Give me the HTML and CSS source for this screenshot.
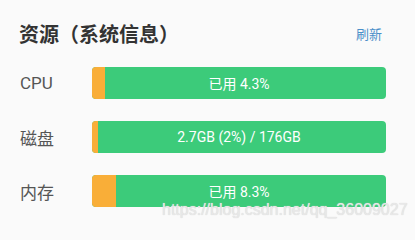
FILE: index.html
```html
<!DOCTYPE html>
<html lang="zh">
<head>
<meta charset="utf-8">
<link rel="stylesheet" href="styles.css">
</head>
<body>
<div class="panel">
  <div class="header">
    <div class="title">资源（系统信息）</div>
    <div class="refresh">刷新</div>
  </div>
  <div class="rows">
    <div class="row">
      <div class="label">CPU</div>
      <div class="bar"><div class="used" style="width:4.3%"></div><span class="text">已用 4.3%</span></div>
    </div>
    <div class="row">
      <div class="label">磁盘</div>
      <div class="bar"><div class="used" style="width:2%"></div><span class="text">2.7GB (2%) / 176GB</span></div>
    </div>
    <div class="row">
      <div class="label">内存</div>
      <div class="bar"><div class="used" style="width:8.3%"></div><span class="text">已用 8.3%</span></div>
    </div>
  </div>
  <div class="watermark">https://blog.csdn.net/qq_36009027</div>
</div>
</body>
</html>
```
FILE: styles.css
```css
html, body {
  margin: 0;
  padding: 0;
  background: #fafafa;
}
body {
  font-family: Roboto, "Noto Sans CJK SC", sans-serif;
  width: 415px;
  height: 232px;
  overflow: hidden;
}
.panel {
  position: relative;
  padding: 19px 29px 0 19px;
  height: 232px;
  box-sizing: border-box;
}
.header {
  display: flex;
  justify-content: space-between;
  align-items: center;
  height: 28px;
}
.title {
  font-size: 20px;
  font-weight: 700;
  color: #333;
  font-family: "Noto Sans CJK SC", sans-serif;
}
.refresh {
  font-size: 13px;
  color: #4a8fc9;
  margin-right: 4px;
  font-family: "Noto Sans CJK SC", sans-serif;
}
.rows {
  display: flex;
  flex-direction: column;
  gap: 22px;
  margin-top: 20px;
}
.row {
  display: grid;
  grid-template-columns: 73px 1fr;
  align-items: center;
}
.label {
  font-size: 17px;
  color: #555;
  padding-left: 1px;
}
.bar {
  position: relative;
  height: 32px;
  background: #3ccb7a;
  border-radius: 4px;
  overflow: hidden;
  display: flex;
  align-items: center;
  justify-content: center;
}
.used {
  position: absolute;
  left: 0;
  top: 0;
  bottom: 0;
  background: #f9ae38;
}
.text {
  position: relative;
  color: #fff;
  font-size: 14px;
}
.watermark {
  position: absolute;
  left: 162px;
  top: 201px;
  font-family: "Liberation Sans", sans-serif;
  font-size: 16px;
  color: #e8e8e8;
  text-shadow: 0 0 1px #d0d0d0;
}
```
